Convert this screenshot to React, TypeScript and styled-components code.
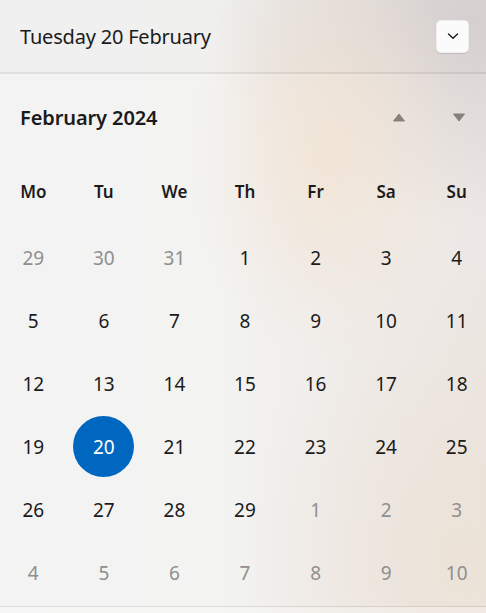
import React from "react";
import styled, { createGlobalStyle } from "styled-components";

const Global = createGlobalStyle`
  html, body { margin: 0; padding: 0; }
  body {
    width: 486px;
    height: 613px;
    overflow: hidden;
    font-family: "Noto Sans", "Open Sans", sans-serif;
    background:
      radial-gradient(ellipse 140px 220px at 330px 150px, rgba(242,228,212,0.9) 0%, rgba(242,228,212,0) 100%),
      radial-gradient(ellipse 260px 200px at 470px 20px, rgba(214,208,208,0.9) 0%, rgba(214,208,208,0) 100%),
      radial-gradient(ellipse 220px 300px at 460px 560px, rgba(236,226,214,0.9) 0%, rgba(236,226,214,0) 100%),
      linear-gradient(90deg, #f3f3f3 0%, #f3f3f2 45%, #ece7e4 100%);
  }
`;

const Panel = styled.div`
  display: flex;
  flex-direction: column;
  height: 613px;
`;

const Header = styled.header`
  height: 72px;
  display: flex;
  align-items: center;
  justify-content: space-between;
  padding: 0 17px 0 20px;
  border-bottom: 2px solid rgba(0, 0, 0, 0.07);
  background: rgba(0, 0, 0, 0.01);
`;

const DateTitle = styled.div`
  font-size: 20px;
  color: #1b1b1b;
  letter-spacing: -0.2px;
`;

const ExpandButton = styled.button`
  width: 33px;
  height: 33px;
  border-radius: 5px;
  border: 1px solid rgba(0, 0, 0, 0.05);
  background: #fbfbfb;
  box-shadow: 0 1px 1px rgba(0, 0, 0, 0.1);
  display: flex;
  align-items: center;
  justify-content: center;
  padding: 0;
  color: #1b1b1b;
`;

const Body = styled.div`
  height: 532px;
  display: flex;
  flex-direction: column;
  border-bottom: 1px solid rgba(0, 0, 0, 0.1);
`;

const Footer = styled.div`
  flex: 1;
  background: rgba(255, 255, 255, 0.25);
`;

const MonthBar = styled.div`
  height: 87px;
  display: flex;
  align-items: center;
  padding: 0 21px 0 20px;
`;

const MonthTitle = styled.div`
  flex: 1;
  font-size: 20px;
  font-weight: 600;
  color: #1b1b1b;
  letter-spacing: -0.1px;
`;

const NavGroup = styled.div`
  display: flex;
  gap: 48px;
  align-items: center;
`;

const NavButton = styled.div`
  width: 12px;
  height: 12px;
  display: flex;
  align-items: center;
  justify-content: center;
  color: #86817c;
`;

const Grid = styled.div`
  display: grid;
  grid-template-columns: repeat(7, 1fr);
  width: 494px;
  margin-left: -2px;
`;

const WeekdayRow = styled(Grid)`
  height: 60px;
  align-items: center;
  margin-bottom: 5px;
`;

const Weekday = styled.div`
  text-align: center;
  font-size: 17px;
  font-weight: 600;
  color: #1b1b1b;
`;

const DayGrid = styled(Grid)`
  grid-auto-rows: 63px;
`;

const DayCell = styled.div<{ $muted?: boolean; $selected?: boolean }>`
  display: flex;
  align-items: center;
  justify-content: center;
  font-size: 19px;
  color: ${(p) => (p.$selected ? "#ffffff" : p.$muted ? "#8f8f8f" : "#1b1b1b")};
`;

const Circle = styled.span<{ $selected?: boolean }>`
  width: 61px;
  height: 61px;
  border-radius: 50%;
  display: flex;
  align-items: center;
  justify-content: center;
  background: ${(p) => (p.$selected ? "#0067c0" : "transparent")};
`;

const weekdays = ["Mo", "Tu", "We", "Th", "Fr", "Sa", "Su"];

type Day = { n: number; muted: boolean };
const days: Day[] = [
  ...[29, 30, 31].map((n) => ({ n, muted: true })),
  ...Array.from({ length: 29 }, (_, i) => ({ n: i + 1, muted: false })),
  ...Array.from({ length: 10 }, (_, i) => ({ n: i + 1, muted: true })),
];

export default function App() {
  return (
    <>
      <Global />
      <Panel>
        <Header>
          <DateTitle>Tuesday 20 February</DateTitle>
          <ExpandButton aria-label="Expand">
            <svg width="12" height="8" viewBox="0 0 12 8" fill="none">
              <path d="M1.5 2 L6 6.3 L10.5 2" stroke="currentColor" strokeWidth="1.4" strokeLinecap="round" strokeLinejoin="round" />
            </svg>
          </ExpandButton>
        </Header>
        <Body>
          <MonthBar>
            <MonthTitle>February 2024</MonthTitle>
            <NavGroup>
              <NavButton>
                <svg width="12" height="9" viewBox="0 0 12 9">
                  <path d="M6 1 L11.5 8 L0.5 8 Z" fill="currentColor" strokeLinejoin="round" stroke="currentColor" strokeWidth="1" />
                </svg>
              </NavButton>
              <NavButton>
                <svg width="12" height="9" viewBox="0 0 12 9">
                  <path d="M0.5 1 L11.5 1 L6 8 Z" fill="currentColor" strokeLinejoin="round" stroke="currentColor" strokeWidth="1" />
                </svg>
              </NavButton>
            </NavGroup>
          </MonthBar>
          <WeekdayRow>
            {weekdays.map((w) => (
              <Weekday key={w}>{w}</Weekday>
            ))}
          </WeekdayRow>
          <DayGrid>
            {days.map((d, i) => {
              const selected = !d.muted && d.n === 20;
              return (
                <DayCell key={i} $muted={d.muted} $selected={selected}>
                  <Circle $selected={selected}>{d.n}</Circle>
                </DayCell>
              );
            })}
          </DayGrid>
        </Body>
        <Footer />
      </Panel>
    </>
  );
}
